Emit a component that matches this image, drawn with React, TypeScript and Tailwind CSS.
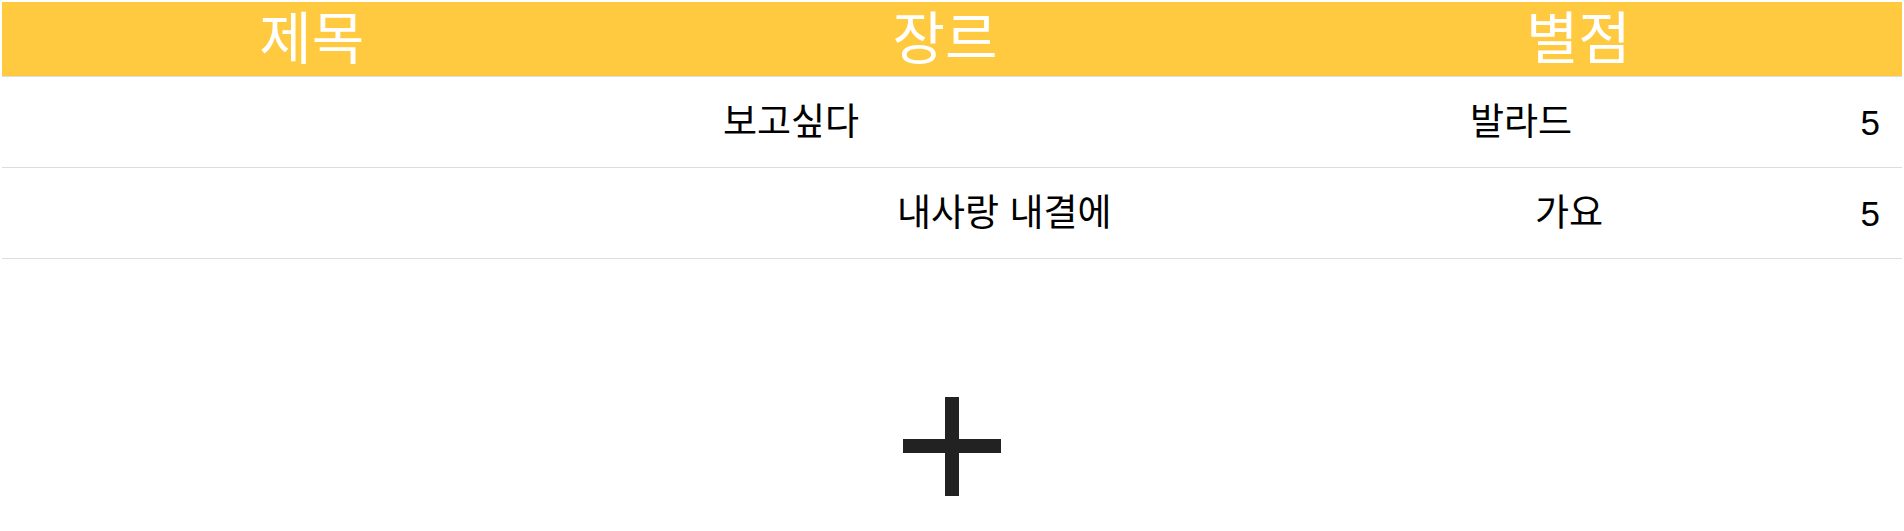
export default function App() {
  return (
    <div
      className="w-[1904px] h-[531px] bg-white p-[2px] overflow-hidden"
      style={{ fontFamily: '"Liberation Sans", "Noto Sans CJK KR", sans-serif' }}
    >
      <div className="flex h-[75px] bg-[#ffca40] border-b border-[#dddddd] text-white text-[57px] leading-none">
        <div className="flex flex-1 -ml-[7px] mr-[7px]">
          <div className="flex flex-1 items-center justify-center">제목</div>
          <div className="flex flex-1 items-center justify-center">장르</div>
          <div className="flex flex-1 items-center justify-center">별점</div>
        </div>
      </div>
      <div className="flex items-center h-[91px] border-b border-[#dddddd] text-black text-[37px] leading-none">
        <div className="w-[1468px] shrink-0 pl-[721px]">보고싶다</div>
        <div>발라드</div>
        <div className="ml-auto mr-[22px] text-[35px]">5</div>
      </div>
      <div className="flex items-center h-[91px] border-b border-[#dddddd] text-black text-[37px] leading-none">
        <div className="w-[1533px] shrink-0 pl-[895px]">내사랑 내결에</div>
        <div>가요</div>
        <div className="ml-auto mr-[22px] text-[35px]">5</div>
      </div>
      <div className="flex justify-center mt-[138px]">
        <svg width="98" height="99" viewBox="0 0 98 99">
          <rect x="42" y="0" width="14" height="99" fill="#222222" />
          <rect x="0" y="42" width="98" height="14" fill="#222222" />
        </svg>
      </div>
    </div>
  );
}
